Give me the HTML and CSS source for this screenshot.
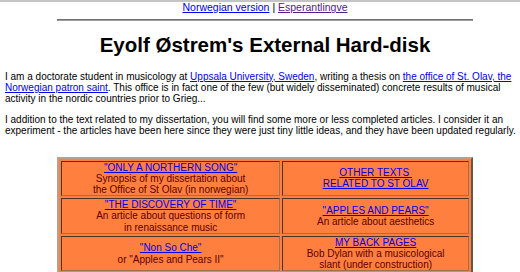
FILE: index.html
```html
<!DOCTYPE html>
<html lang="en">
<head>
    <meta charset="UTF-8">
    <title>Eyolf Østrem's External Hard-disk</title>
    <link rel="stylesheet" href="styles.css">
</head>
<body>
    <div class="topline"></div>
    <div class="page">
        <div class="lang">
            <a href="#">Norwegian version</a> | <a href="#" class="visited">Esperantlingve</a>
        </div>
        <hr>

        <h1>Eyolf Østrem's External Hard-disk</h1>

        <p>I am a doctorate student in musicology at <a href="#">Uppsala University, Sweden</a>, writing a thesis on <a href="#">the office of St. Olav, the Norwegian patron saint</a>. This office is in fact one of the few (but widely disseminated) concrete results of musical activity in the nordic countries prior to Grieg...</p>

        <p>I addition to the text related to my dissertation, you will find some more or less completed articles. I consider it an experiment - the articles have been here since they were just tiny little ideas, and they have been updated regularly.</p>

        <table class="articles">
            <tr>
                <td class="left">
                    <a href="#">"ONLY A NORTHERN SONG"</a><br>
                    Synopsis of my dissertation about<br>
                    the Office of St Olav (in norwegian)
                </td>
                <td>
                    <a href="#">OTHER TEXTS&nbsp;<br>RELATED TO ST OLAV</a>
                </td>
            </tr>
            <tr>
                <td class="left">
                    <a href="#">"THE DISCOVERY OF TIME"</a><br>
                    An article about questions of form<br>
                    in renaissance music
                </td>
                <td>
                    <a href="#">"APPLES AND PEARS"</a><br>
                    An article about aesthetics
                </td>
            </tr>
            <tr>
                <td class="left">
                    <a href="#">"Non So Che"</a><br>
                    or "Apples and Pears II"
                </td>
                <td>
                    <a href="#">MY BACK PAGES</a><br>
                    Bob Dylan with a musicological<br>
                    slant (under construction)
                </td>
            </tr>
        </table>
    </div>
</body>
</html>
```

FILE: styles.css
```css
/* Gammeldags hjemmeside, liten Arial */
html {
    overflow: hidden;
}

body {
    margin: 0;
    font-family: "Liberation Sans", Arial, sans-serif;
    font-size: 10px;
    line-height: 1.12;
    color: #000;
    background-color: #fff;
}

.topline {
    border-top: 2px solid #c4c4c4;
}

.page {
    width: 520px;
    margin-left: 5px;
}

a {
    color: #0000ee;
}

a.visited {
    color: #551a8b;
}

.lang {
    text-align: center;
    font-size: 10.5px;
}

hr {
    width: 80%;
    margin: 5px auto;
    border: none;
    border-top: 1px solid #707070;
    border-bottom: 1px solid #a0a0a0;
}

h1 {
    text-align: center;
    font-size: 2.05em;
    margin: 13px 0 14px;
}

p {
    margin: 10px 0;
}

/* Tabellen med artiklene */
.articles {
    width: 80%;
    margin: 20px auto 0;
    background-color: #ff7f3f;
    border: 2px outset #b8a090;
    border-spacing: 2px;
    color: #600000;
}

.articles td {
    text-align: center;
    vertical-align: middle;
    border: 1px inset #a07050;
    padding: 0;
}

.articles td.left {
    width: 54%;
}
```
